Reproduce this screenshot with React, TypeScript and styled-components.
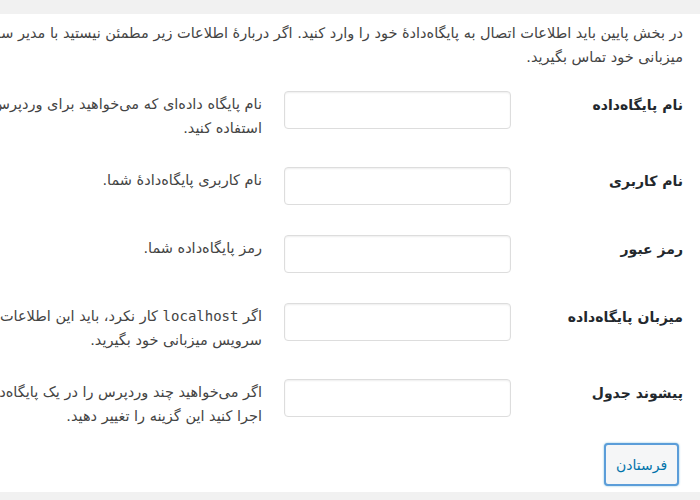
import React from "react";
import styled, { createGlobalStyle } from "styled-components";

const Global = createGlobalStyle`
  html, body { margin: 0; padding: 0; background: #f1f1f1; }
  body { font-family: "DejaVu Sans", "Noto Sans", sans-serif; }
`;

const Card = styled.div`
  direction: rtl;
  margin-top: 14px;
  height: 478px;
  background: #fff;
  overflow: hidden;
  padding: 7px 17px 0 17px;
  box-sizing: border-box;
  color: #444;
  font-size: 14.5px;
`;

const Intro = styled.p`
  margin: 0 0 22px 0;
  line-height: 24px;
  white-space: nowrap;
`;

const Rows = styled.div`
  display: flex;
  flex-direction: column;
  gap: 27px;
`;

const Row = styled.div`
  display: flex;
  align-items: flex-start;
`;

const Label = styled.label`
  flex: 0 0 172px;
  font-weight: bold;
  color: #23282d;
  font-size: 14px;
  line-height: 24px;
  padding-top: 2px;
`;

const Field = styled.input`
  flex: 0 0 227px;
  width: 227px;
  height: 38px;
  box-sizing: border-box;
  margin: 0 0 3px 0;
  border: 1px solid #ddd;
  border-radius: 4px;
  box-shadow: inset 0 1px 2px rgba(0, 0, 0, 0.07);
  background: #fff;
`;

const Desc = styled.p`
  margin: 0 22px 0 0;
  padding-top: 1px;
  line-height: 24px;
  white-space: nowrap;
  flex-shrink: 0;
  color: #444;
`;

const Code = styled.code`
  font-family: "DejaVu Sans Mono", "Liberation Mono", monospace;
  font-size: 14px;
  direction: ltr;
  unicode-bidi: embed;
`;

const Actions = styled.div`
  margin-top: 15px;
  padding-right: 4px;
  display: flex;
`;

const Submit = styled.button`
  width: 75px;
  height: 43px;
  box-sizing: border-box;
  border: 2px solid #5b9dd9;
  border-radius: 4px;
  background: #f5f6f7;
  color: #0073aa;
  font-family: "DejaVu Sans", sans-serif;
  font-size: 14px;
  box-shadow: 0 0 2px rgba(30, 140, 190, 0.6);
`;

const rows: { label: string; desc: React.ReactNode[] }[] = [
  {
    label: "نام پایگاه‌داده",
    desc: ["نام پایگاه داده‌ای که می‌خواهید برای وردپرس", "استفاده کنید."],
  },
  { label: "نام کاربری", desc: ["نام کاربری پایگاه‌دادهٔ شما."] },
  { label: "رمز عبور", desc: ["رمز پایگاه‌داده شما."] },
  {
    label: "میزبان پایگاه‌داده",
    desc: [
      <>
        اگر <Code>localhost</Code> کار نکرد، باید این اطلاعات را از
      </>,
      "سرویس میزبانی خود بگیرید.",
    ],
  },
  {
    label: "پیشوند جدول",
    desc: [
      "اگر می‌خواهید چند وردپرس را در یک پایگاه‌داده",
      "اجرا کنید این گزینه را تغییر دهید.",
    ],
  },
];

export default function App() {
  return (
    <>
      <Global />
      <Card>
        <Intro>
          در بخش پایین باید اطلاعات اتصال به پایگاه‌دادهٔ خود را وارد کنید. اگر دربارهٔ اطلاعات زیر مطمئن نیستید با مدیر سرویس
          <br />
          میزبانی خود تماس بگیرید.
        </Intro>
        <Rows>
          {rows.map((r, i) => (
            <Row key={i}>
              <Label>{r.label}</Label>
              <Field type="text" />
              <Desc>
                {r.desc.map((d, j) => (
                  <React.Fragment key={j}>
                    {j > 0 && <br />}
                    {d}
                  </React.Fragment>
                ))}
              </Desc>
            </Row>
          ))}
        </Rows>
        <Actions>
          <Submit type="button">فرستادن</Submit>
        </Actions>
      </Card>
    </>
  );
}
